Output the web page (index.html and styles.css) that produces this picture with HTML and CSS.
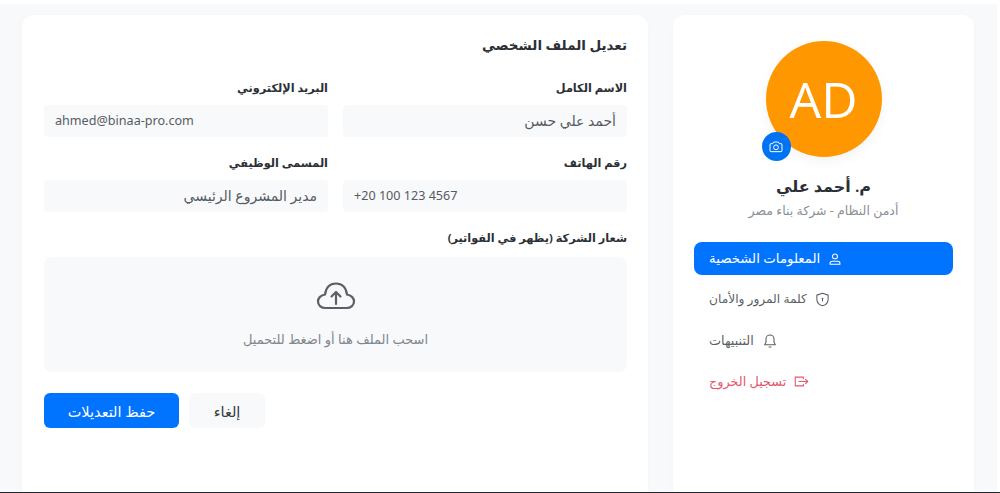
FILE: index.html
```html
<!DOCTYPE html>
<html lang="ar" dir="rtl">
<head>
<meta charset="utf-8">
<title>الملف الشخصي</title>
<link rel="stylesheet" href="styles.css">
</head>
<body>
<div class="page">
  <main class="layout">
    <aside class="card side">
      <div class="avatar-wrap">
        <div class="avatar">AD</div>
        <button class="cam" aria-label="camera">
          <svg viewBox="0 0 24 24" width="16" height="16" fill="none" stroke="#fff" stroke-width="1.500" stroke-linejoin="round"><path d="M3 8.500A1.500 1.500 0 0 1 4.500 7H7l1.500-2.500h7L17 7h2.500A1.500 1.500 0 0 1 21 8.500v9a1.500 1.500 0 0 1-1.500 1.500h-15A1.500 1.500 0 0 1 3 17.500z"/><circle cx="12" cy="12.500" r="3.600"/></svg>
        </button>
      </div>
      <h2 class="name">م. أحمد علي</h2>
      <p class="role">أدمن النظام - شركة بناء مصر</p>
      <nav class="menu">
        <a class="item active"><svg viewBox="0 0 24 24" width="14" height="14" fill="none" stroke="currentColor" stroke-width="1.800" stroke-linejoin="round"><circle cx="12" cy="7.500" r="4.200"/><path d="M3.500 21v-1.500c0-2 1.500-3.500 3.500-3.500h10c2 0 3.500 1.500 3.500 3.500V21z"/></svg><span>المعلومات الشخصية</span></a>
        <a class="item compact"><svg viewBox="0 0 24 24" width="15" height="15" fill="none" stroke="currentColor" stroke-width="1.700" stroke-linejoin="round"><path d="M12 2l9 3v6.500c0 5-3.500 9-9 10.500-5.500-1.500-9-5.500-9-10.500V5z"/><circle cx="12" cy="10.500" r="1.500" fill="currentColor" stroke="none"/><path d="M12 11v4"/></svg><span>كلمة المرور والأمان</span></a>
        <a class="item"><svg viewBox="0 0 24 24" width="16" height="16" fill="none" stroke="currentColor" stroke-width="1.600" stroke-linejoin="round" stroke-linecap="round"><path d="M12 3a6 6 0 0 0-6 6v5l-2 3.500h16L18 14V9a6 6 0 0 0-6-6z"/><path d="M10.500 21h3"/></svg><span>التنبيهات</span></a>
        <a class="item danger"><svg viewBox="0 0 24 24" width="15" height="15" fill="none" stroke="currentColor" stroke-width="1.700" stroke-linejoin="round" stroke-linecap="round"><path d="M15 7.500V5H2v14h13v-2.500"/><path d="M8 12h14M18.500 8.500L22 12l-3.500 3.500"/></svg><span>تسجيل الخروج</span></a>
      </nav>
    </aside>
    <section class="card form">
      <h1 class="title">تعديل الملف الشخصي</h1>
      <div class="grid">
        <div class="field"><label>الاسم الكامل</label><div class="input">أحمد علي حسن</div></div>
        <div class="field"><label>البريد الإلكتروني</label><div class="input ltr">ahmed@binaa-pro.com</div></div>
        <div class="field"><label>رقم الهاتف</label><div class="input ltr">+20 100 123 4567</div></div>
        <div class="field"><label>المسمى الوظيفي</label><div class="input">مدير المشروع الرئيسي</div></div>
      </div>
      <label class="logo-label">شعار الشركة (يظهر في الفواتير)</label>
      <div class="drop">
        <svg viewBox="0 0 40 32" width="40" height="32" fill="none" stroke="#5b6068" stroke-width="2.200" stroke-linecap="round" stroke-linejoin="round"><path d="M9.500 27C5 27 2 24 2 20.500S5 14 9 13.500C10 6.500 14 2.500 20 2.500S30 6.500 31 13.500C35 14 38 17 38 20.500S35 27 30.500 27z"/><path d="M20 23V11M15.500 15.500L20 11l4.500 4.500"/></svg>
        <p>اسحب الملف هنا أو اضغط للتحميل</p>
      </div>
      <div class="actions">
        <button class="btn ghost">إلغاء</button>
        <button class="btn primary">حفظ التعديلات</button>
      </div>
    </section>
  </main>
</div>
</body>
</html>
```
FILE: styles.css
```css
* { box-sizing: border-box; }
html, body { margin: 0; height: 493px; overflow: hidden; background: #fff; }
body { font-family: "Noto Sans", "Open Sans", "DejaVu Sans", sans-serif; color: #212529; }
.page { height: 493px; padding-top: 4px; border-bottom: 1px solid #23272b; }
.layout { height: 488px; margin-right: 3px; background: #f7f9fb; display: flex; gap: 25px; padding: 11px 23px 0 22px; }
.card { background: #fff; border-radius: 12px 12px 0 0; box-shadow: 0 1px 6px rgba(30,40,60,.02); }
.side { width: 301px; flex: none; padding: 26px 21px 0; display: flex; flex-direction: column; align-items: center; }
.form { flex: 1; padding: 19px 21px 0 22px; }
.avatar-wrap { position: relative; width: 116px; height: 116px; }
.avatar { width: 116px; height: 116px; border-radius: 50%; background: #ff9800; color: #fff; font-family: "Open Sans", sans-serif; font-size: 50px; line-height: 116px; text-align: center; box-shadow: 0 4px 12px rgba(0,0,0,.05); }
.cam { position: absolute; left: -4px; bottom: -4px; width: 29px; height: 29px; padding: 0; border: 0; border-radius: 50%; background: #0073f5; display: flex; align-items: center; justify-content: center; }
.name { margin: 15px 0 0; font-size: 16px; line-height: 28px; font-weight: 600; color: #2b3036; }
.role { margin: 2px 0 0; font-size: 12.500px; line-height: 18px; color: #8a9097; }
.menu { width: 259px; margin-top: 22px; display: flex; flex-direction: column; gap: 8px; }
.item { height: 33px; padding: 0 15px 2px; border-radius: 8px; display: flex; align-items: center; justify-content: flex-end; gap: 8px; font-size: 12.800px; color: #5a5f66; }
.item svg { margin-top: 2px; }
.item.compact { font-size: 12.200px; }
.item.active { background: #0073ff; color: #fff; font-size: 13.300px; }
.item.danger { color: #e5566d; }
.title { margin: 0; font-size: 13.500px; line-height: 22px; font-weight: 600; color: #2b3036; }
.grid { margin-top: 25px; display: grid; grid-template-columns: 1fr 1fr; column-gap: 15px; row-gap: 19px; }
.field label, .logo-label { display: block; font-size: 11.300px; line-height: 14px; font-weight: 700; color: #2b3036; }
.input { height: 32px; margin-top: 10px; padding: 0 11px; background: #f8f9fb; border-radius: 4px; font-size: 14px; line-height: 32px; color: #565b62; }
.ltr { direction: ltr; text-align: left; font-size: 12.600px; }
.logo-label { margin-top: 19px; }
.drop { height: 115px; margin-top: 12px; background: #f8f9fb; border-radius: 8px; display: flex; flex-direction: column; align-items: center; padding-top: 24px; }
.drop p { margin: 17px 0 0; font-size: 13px; line-height: 18px; color: #80868d; }
.actions { margin-top: 21px; display: flex; justify-content: flex-end; gap: 10px; }
.btn { height: 35px; border: 0; border-radius: 6px; font-family: inherit; font-size: 14.500px; padding: 0; }
.ghost { width: 76px; background: #f8f9fb; color: #33383e; }
.primary { width: 135px; background: #0073ff; color: #fff; }
```
